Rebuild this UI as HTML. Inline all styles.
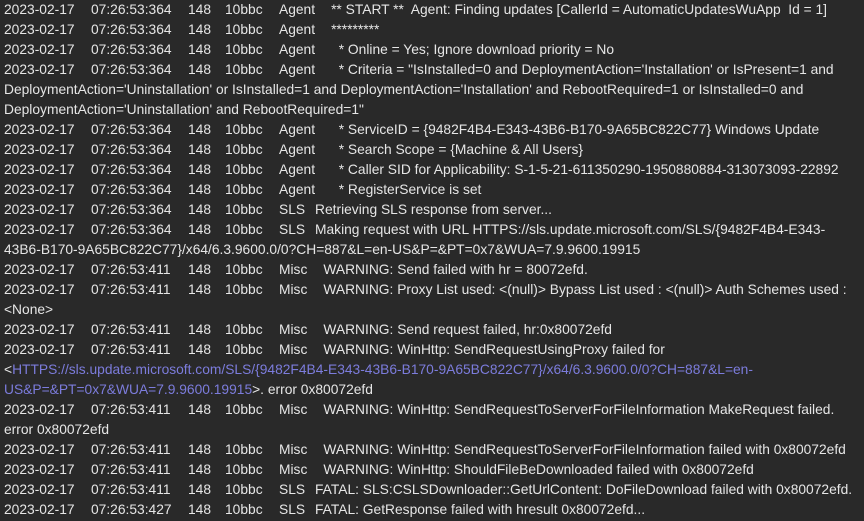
<!DOCTYPE html>
<html><head><meta charset="utf-8"><style>
html,body{margin:0;padding:0;background:#292929;width:864px;height:521px;overflow:hidden}
body{font-family:"Liberation Sans",Arial,sans-serif;font-size:13.8px;color:#e6e6e6}
.l{position:absolute;left:4px;height:20px;line-height:20px;white-space:pre}
.d{display:inline-block;width:87px}.t{display:inline-block;width:97px}.p{display:inline-block;width:37px}.i{display:inline-block;width:54px}
.c{display:inline-block;margin-right:16px}
.s{display:inline-block;width:36px}
a{color:#7c7cdc;text-decoration:none}
</style></head><body>
<div class="l" style="top:0"><span class="d">2023-02-17</span><span class="t">07:26:53:364</span><span class="p">148</span><span class="i">10bbc</span><span class="c">Agent</span>** START **  Agent: Finding updates [CallerId = AutomaticUpdatesWuApp  Id = 1]</div>
<div class="l" style="top:20px"><span class="d">2023-02-17</span><span class="t">07:26:53:364</span><span class="p">148</span><span class="i">10bbc</span><span class="c">Agent</span>*********</div>
<div class="l" style="top:40px"><span class="d">2023-02-17</span><span class="t">07:26:53:364</span><span class="p">148</span><span class="i">10bbc</span><span class="c">Agent</span>  * Online = Yes; Ignore download priority = No</div>
<div class="l" style="top:60px"><span class="d">2023-02-17</span><span class="t">07:26:53:364</span><span class="p">148</span><span class="i">10bbc</span><span class="c">Agent</span>  * Criteria = "IsInstalled=0 and DeploymentAction='Installation' or IsPresent=1 and</div>
<div class="l" style="top:80px">DeploymentAction='Uninstallation' or IsInstalled=1 and DeploymentAction='Installation' and RebootRequired=1 or IsInstalled=0 and</div>
<div class="l" style="top:100px">DeploymentAction='Uninstallation' and RebootRequired=1"</div>
<div class="l" style="top:120px"><span class="d">2023-02-17</span><span class="t">07:26:53:364</span><span class="p">148</span><span class="i">10bbc</span><span class="c">Agent</span>  * ServiceID = {9482F4B4-E343-43B6-B170-9A65BC822C77} Windows Update</div>
<div class="l" style="top:140px"><span class="d">2023-02-17</span><span class="t">07:26:53:364</span><span class="p">148</span><span class="i">10bbc</span><span class="c">Agent</span>  * Search Scope = {Machine &amp; All Users}</div>
<div class="l" style="top:160px"><span class="d">2023-02-17</span><span class="t">07:26:53:364</span><span class="p">148</span><span class="i">10bbc</span><span class="c">Agent</span>  * Caller SID for Applicability: S-1-5-21-611350290-1950880884-313073093-22892</div>
<div class="l" style="top:180px"><span class="d">2023-02-17</span><span class="t">07:26:53:364</span><span class="p">148</span><span class="i">10bbc</span><span class="c">Agent</span>  * RegisterService is set</div>
<div class="l" style="top:200px"><span class="d">2023-02-17</span><span class="t">07:26:53:364</span><span class="p">148</span><span class="i">10bbc</span><span class="s">SLS</span>Retrieving SLS response from server...</div>
<div class="l" style="top:220px"><span class="d">2023-02-17</span><span class="t">07:26:53:364</span><span class="p">148</span><span class="i">10bbc</span><span class="s">SLS</span>Making request with URL HTTPS://sls.update.microsoft.com/SLS/{9482F4B4-E343-</div>
<div class="l" style="top:240px">43B6-B170-9A65BC822C77}/x64/6.3.9600.0/0?CH=887&amp;L=en-US&amp;P=&amp;PT=0x7&amp;WUA=7.9.9600.19915</div>
<div class="l" style="top:260px"><span class="d">2023-02-17</span><span class="t">07:26:53:411</span><span class="p">148</span><span class="i">10bbc</span><span class="c">Misc</span>WARNING: Send failed with hr = 80072efd.</div>
<div class="l" style="top:280px"><span class="d">2023-02-17</span><span class="t">07:26:53:411</span><span class="p">148</span><span class="i">10bbc</span><span class="c">Misc</span>WARNING: Proxy List used: &lt;(null)&gt; Bypass List used : &lt;(null)&gt; Auth Schemes used :</div>
<div class="l" style="top:300px">&lt;None&gt;</div>
<div class="l" style="top:320px"><span class="d">2023-02-17</span><span class="t">07:26:53:411</span><span class="p">148</span><span class="i">10bbc</span><span class="c">Misc</span>WARNING: Send request failed, hr:0x80072efd</div>
<div class="l" style="top:340px"><span class="d">2023-02-17</span><span class="t">07:26:53:411</span><span class="p">148</span><span class="i">10bbc</span><span class="c">Misc</span>WARNING: WinHttp: SendRequestUsingProxy failed for</div>
<div class="l" style="top:360px">&lt;<a>HTTPS://sls.update.microsoft.com/SLS/{9482F4B4-E343-43B6-B170-9A65BC822C77}/x64/6.3.9600.0/0?CH=887&amp;L=en-</a></div>
<div class="l" style="top:380px"><a>US&amp;P=&amp;PT=0x7&amp;WUA=7.9.9600.19915</a>&gt;. error 0x80072efd</div>
<div class="l" style="top:400px"><span class="d">2023-02-17</span><span class="t">07:26:53:411</span><span class="p">148</span><span class="i">10bbc</span><span class="c">Misc</span>WARNING: WinHttp: SendRequestToServerForFileInformation MakeRequest failed.</div>
<div class="l" style="top:420px">error 0x80072efd</div>
<div class="l" style="top:440px"><span class="d">2023-02-17</span><span class="t">07:26:53:411</span><span class="p">148</span><span class="i">10bbc</span><span class="c">Misc</span>WARNING: WinHttp: SendRequestToServerForFileInformation failed with 0x80072efd</div>
<div class="l" style="top:460px"><span class="d">2023-02-17</span><span class="t">07:26:53:411</span><span class="p">148</span><span class="i">10bbc</span><span class="c">Misc</span>WARNING: WinHttp: ShouldFileBeDownloaded failed with 0x80072efd</div>
<div class="l" style="top:480px"><span class="d">2023-02-17</span><span class="t">07:26:53:411</span><span class="p">148</span><span class="i">10bbc</span><span class="s">SLS</span>FATAL: SLS:CSLSDownloader::GetUrlContent: DoFileDownload failed with 0x80072efd.</div>
<div class="l" style="top:500px"><span class="d">2023-02-17</span><span class="t">07:26:53:427</span><span class="p">148</span><span class="i">10bbc</span><span class="s">SLS</span>FATAL: GetResponse failed with hresult 0x80072efd...</div>
</body></html>
